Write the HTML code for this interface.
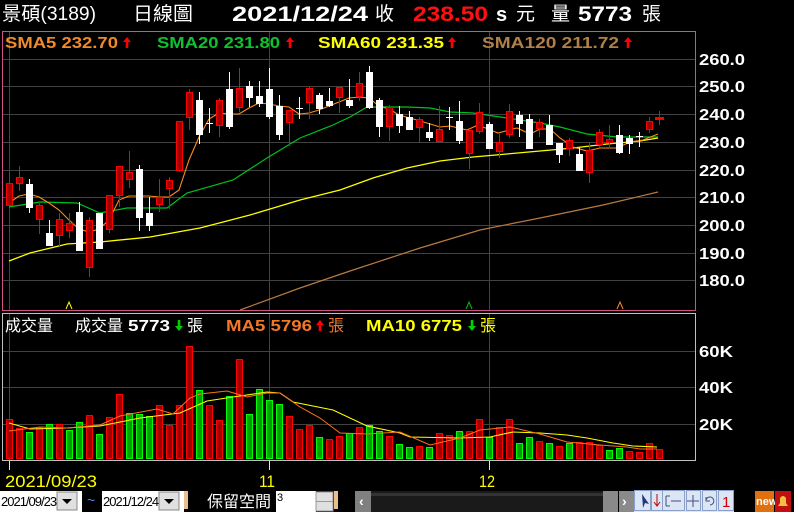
<!DOCTYPE html>
<html><head><meta charset="utf-8"><style>
html,body{margin:0;padding:0;background:#000;width:794px;height:512px;overflow:hidden;position:relative;font-family:"Liberation Sans","Noto Sans CJK TC",sans-serif}
svg{position:absolute;left:0;top:0}
</style></head><body>
<svg width="794" height="512" viewBox="0 0 794 512" xmlns="http://www.w3.org/2000/svg" font-family="Liberation Sans, Noto Sans CJK TC, sans-serif">
<defs>
<path id="up" d="M0,0 L4,5 L1.3,5 L1.3,11 L-1.3,11 L-1.3,5 L-4,5 Z"/>
<path id="dn" d="M0,11 L4,6 L1.3,6 L1.3,0 L-1.3,0 L-1.3,6 L-4,6 Z"/>
</defs>
<g stroke="#424242" stroke-width="1">
<line x1="3" y1="59.5" x2="695" y2="59.5"/><line x1="3" y1="86.5" x2="695" y2="86.5"/><line x1="3" y1="114.5" x2="695" y2="114.5"/><line x1="3" y1="142.5" x2="695" y2="142.5"/><line x1="3" y1="170.5" x2="695" y2="170.5"/><line x1="3" y1="197.5" x2="695" y2="197.5"/><line x1="3" y1="225.5" x2="695" y2="225.5"/><line x1="3" y1="253.5" x2="695" y2="253.5"/><line x1="3" y1="280.5" x2="695" y2="280.5"/>
<line x1="9.5" y1="32" x2="9.5" y2="310"/><line x1="269.5" y1="32" x2="269.5" y2="310"/><line x1="489.5" y1="32" x2="489.5" y2="310"/>
<line x1="3" y1="351.5" x2="695" y2="351.5"/><line x1="3" y1="387.5" x2="695" y2="387.5"/><line x1="3" y1="424.5" x2="695" y2="424.5"/>
<line x1="9.5" y1="314" x2="9.5" y2="460"/><line x1="269.5" y1="314" x2="269.5" y2="460"/><line x1="489.5" y1="314" x2="489.5" y2="460"/>
</g>
<rect x="2.5" y="31.5" width="693" height="279" fill="none" stroke="#d0508a"/>
<rect x="2.5" y="313.5" width="693" height="147" fill="none" stroke="#c0c0c0"/>
<polyline fill="none" stroke="#b87a40" stroke-width="1.2" points="240,310 300,288 350,271 420,248 480,230 540,218 603,205 658,192"/>
<polyline fill="none" stroke="#ffff00" stroke-width="1.3" points="9,261 30,253 67,244 100,242 150,237 200,228 250,215 300,200 340,190 373,178 407,168 440,161 473,157 507,154 540,151 573,148 607,144 640,141 658,138"/>
<polyline fill="none" stroke="#00c020" stroke-width="1.2" points="9,207 40,202 77,203 100,213 127,208 167,208 187,193 233,180 267,158 300,138 333,125 350,117 367,107 407,107 430,108 450,112 473,113 507,118 540,123 560,127 587,134 617,137 643,137 658,137"/>
<polyline fill="none" stroke="#ff8c1a" stroke-width="1.1" points="9,203 19,196 29,194 39,197 49,203 59,210 69,220 79,229 89,232 99,229 109,220 119,200 129,196 139,196 149,196 159,197 169,197 179,190 189,160 199,137 209,119 219,113 229,114 239,114 249,108 259,103 269,104 279,106 289,107 299,114 309,113 319,110 329,106 339,102 349,98 359,97 369,98 379,106 389,109 399,115 417,120 440,127 450,126 467,130 478,125 498,133 517,128 530,134 540,129 550,129 560,138 573,147 587,151 600,148 617,148 630,142 643,140 658,134"/>
<g stroke-width="1">
<g stroke="#ff0000" fill="#a00000">
<line x1="9.5" y1="172" x2="9.5" y2="206"/><rect x="6.5" y="183.5" width="6" height="22"/>
<line x1="19.5" y1="166" x2="19.5" y2="191"/><rect x="16.5" y="177.5" width="6" height="6"/>
<line x1="39.5" y1="202" x2="39.5" y2="234"/><rect x="36.5" y="205.5" width="6" height="14"/>
<line x1="59.5" y1="213" x2="59.5" y2="246"/><rect x="56.5" y="219.5" width="6" height="16"/>
<line x1="69.5" y1="213" x2="69.5" y2="238"/><rect x="66.5" y="223.5" width="6" height="7"/>
<line x1="89.5" y1="217" x2="89.5" y2="277"/><rect x="86.5" y="220.5" width="6" height="47"/>
<line x1="109.5" y1="195" x2="109.5" y2="233"/><rect x="106.5" y="195.5" width="6" height="34"/>
<line x1="119.5" y1="166" x2="119.5" y2="207"/><rect x="116.5" y="166.5" width="6" height="29"/>
<line x1="129.5" y1="151" x2="129.5" y2="188"/><rect x="126.5" y="172.5" width="6" height="7"/>
<line x1="159.5" y1="179" x2="159.5" y2="212"/><rect x="156.5" y="197.5" width="6" height="7"/>
<line x1="169.5" y1="177" x2="169.5" y2="209"/><rect x="166.5" y="180.5" width="6" height="8"/>
<line x1="179.5" y1="121" x2="179.5" y2="172"/><rect x="176.5" y="121.5" width="6" height="49"/>
<line x1="189.5" y1="89" x2="189.5" y2="130"/><rect x="186.5" y="92.5" width="6" height="25"/>
<line x1="219.5" y1="98" x2="219.5" y2="137"/><rect x="216.5" y="100.5" width="6" height="25"/>
<line x1="239.5" y1="68" x2="239.5" y2="112"/><rect x="236.5" y="88.5" width="6" height="19"/>
<line x1="289.5" y1="110" x2="289.5" y2="146"/><rect x="286.5" y="110.5" width="6" height="12"/>
<line x1="309.5" y1="87" x2="309.5" y2="119"/><rect x="306.5" y="88.5" width="6" height="14"/>
<line x1="339.5" y1="87" x2="339.5" y2="113"/><rect x="336.5" y="87.5" width="6" height="10"/>
<line x1="359.5" y1="72" x2="359.5" y2="101"/><rect x="356.5" y="83.5" width="6" height="13"/>
<line x1="389.5" y1="105" x2="389.5" y2="141"/><rect x="386.5" y="107.5" width="6" height="19"/>
<line x1="419.5" y1="117" x2="419.5" y2="142"/><rect x="416.5" y="119.5" width="6" height="8"/>
<line x1="439.5" y1="106" x2="439.5" y2="141"/><rect x="436.5" y="129.5" width="6" height="12"/>
<line x1="469.5" y1="130" x2="469.5" y2="169"/><rect x="466.5" y="130.5" width="6" height="23"/>
<line x1="479.5" y1="103" x2="479.5" y2="134"/><rect x="476.5" y="112.5" width="6" height="19"/>
<line x1="499.5" y1="134" x2="499.5" y2="158"/><rect x="496.5" y="142.5" width="6" height="9"/>
<line x1="509.5" y1="104" x2="509.5" y2="138"/><rect x="506.5" y="111.5" width="6" height="23"/>
<line x1="539.5" y1="119" x2="539.5" y2="137"/><rect x="536.5" y="122.5" width="6" height="6"/>
<line x1="569.5" y1="138" x2="569.5" y2="156"/><rect x="566.5" y="140.5" width="6" height="8"/>
<line x1="589.5" y1="143" x2="589.5" y2="183"/><rect x="586.5" y="150.5" width="6" height="22"/>
<line x1="599.5" y1="129" x2="599.5" y2="148"/><rect x="596.5" y="132.5" width="6" height="12"/>
<line x1="609.5" y1="125" x2="609.5" y2="148"/><rect x="606.5" y="139.5" width="6" height="3"/>
<line x1="649.5" y1="117" x2="649.5" y2="133"/><rect x="646.5" y="121.5" width="6" height="8"/>
<line x1="659.5" y1="111" x2="659.5" y2="125"/><rect x="655.5" y="117.5" width="8" height="2" fill="#ff0000"/>
</g>
<g stroke="#ffffff" fill="#ffffff">
<line x1="29.5" y1="179" x2="29.5" y2="213"/><rect x="26.5" y="184.5" width="6" height="23"/>
<line x1="49.5" y1="220" x2="49.5" y2="246"/><rect x="46.5" y="233.5" width="6" height="12"/>
<line x1="79.5" y1="202" x2="79.5" y2="250"/><rect x="76.5" y="212.5" width="6" height="38"/>
<line x1="99.5" y1="213" x2="99.5" y2="249"/><rect x="96.5" y="213.5" width="6" height="35"/>
<line x1="139.5" y1="165" x2="139.5" y2="231"/><rect x="136.5" y="169.5" width="6" height="48"/>
<line x1="149.5" y1="197" x2="149.5" y2="231"/><rect x="146.5" y="213.5" width="6" height="12"/>
<line x1="199.5" y1="92" x2="199.5" y2="144"/><rect x="196.5" y="100.5" width="6" height="34"/>
<line x1="209.5" y1="108" x2="209.5" y2="133"/><line x1="206" y1="123.5" x2="213" y2="123.5"/>
<line x1="229.5" y1="72" x2="229.5" y2="129"/><rect x="226.5" y="89.5" width="6" height="37"/>
<line x1="249.5" y1="81" x2="249.5" y2="107"/><rect x="246.5" y="86.5" width="6" height="11"/>
<line x1="259.5" y1="81" x2="259.5" y2="107"/><rect x="256.5" y="96.5" width="6" height="7"/>
<line x1="269.5" y1="68" x2="269.5" y2="119"/><rect x="266.5" y="89.5" width="6" height="27"/>
<line x1="279.5" y1="95" x2="279.5" y2="140"/><rect x="276.5" y="106.5" width="6" height="28"/>
<line x1="299.5" y1="97" x2="299.5" y2="119"/><line x1="296" y1="108.5" x2="303" y2="108.5"/>
<line x1="319.5" y1="93" x2="319.5" y2="114"/><rect x="316.5" y="95.5" width="6" height="13"/>
<line x1="329.5" y1="88" x2="329.5" y2="107"/><rect x="326.5" y="101.5" width="6" height="4"/>
<line x1="349.5" y1="79" x2="349.5" y2="108"/><rect x="346.5" y="100.5" width="6" height="5"/>
<line x1="369.5" y1="66" x2="369.5" y2="109"/><rect x="366.5" y="72.5" width="6" height="35"/>
<line x1="379.5" y1="98" x2="379.5" y2="137"/><rect x="376.5" y="100.5" width="6" height="26"/>
<line x1="399.5" y1="106" x2="399.5" y2="133"/><rect x="396.5" y="114.5" width="6" height="11"/>
<line x1="409.5" y1="111" x2="409.5" y2="130"/><rect x="406.5" y="117.5" width="6" height="12"/>
<line x1="429.5" y1="123" x2="429.5" y2="141"/><rect x="426.5" y="132.5" width="6" height="5"/>
<line x1="449.5" y1="107" x2="449.5" y2="130"/><line x1="446" y1="117.5" x2="453" y2="117.5"/>
<line x1="459.5" y1="101" x2="459.5" y2="144"/><rect x="456.5" y="121.5" width="6" height="19"/>
<line x1="489.5" y1="122" x2="489.5" y2="148"/><rect x="486.5" y="124.5" width="6" height="24"/>
<line x1="519.5" y1="111" x2="519.5" y2="137"/><rect x="516.5" y="115.5" width="6" height="8"/>
<line x1="529.5" y1="114" x2="529.5" y2="148"/><rect x="526.5" y="119.5" width="6" height="29"/>
<line x1="549.5" y1="115" x2="549.5" y2="145"/><rect x="546.5" y="125.5" width="6" height="19"/>
<line x1="559.5" y1="143" x2="559.5" y2="163"/><rect x="556.5" y="143.5" width="6" height="11"/>
<line x1="579.5" y1="148" x2="579.5" y2="170"/><rect x="576.5" y="154.5" width="6" height="16"/>
<line x1="619.5" y1="125" x2="619.5" y2="154"/><rect x="616.5" y="135.5" width="6" height="17"/>
<line x1="629.5" y1="135" x2="629.5" y2="154"/><rect x="626.5" y="138.5" width="6" height="5"/>
<line x1="639.5" y1="132" x2="639.5" y2="147"/><line x1="636" y1="136.5" x2="643" y2="136.5"/>
</g>
</g>
<path d="M66,309 L69,302 L72,309" fill="none" stroke="#ffff00"/>
<path d="M466,309 L469,302 L472,309" fill="none" stroke="#00c000"/>
<path d="M617,309 L620,302 L623,309" fill="none" stroke="#ff8c1a"/>
<g stroke="#ff0000" fill="#a00000">
<rect x="6.5" y="419.5" width="6" height="39"/><rect x="16.5" y="428.5" width="6" height="30"/><rect x="36.5" y="427.5" width="6" height="31"/><rect x="56.5" y="424.5" width="6" height="34"/><rect x="86.5" y="415.5" width="6" height="43"/><rect x="106.5" y="417.5" width="6" height="41"/><rect x="116.5" y="394.5" width="6" height="64"/><rect x="156.5" y="405.5" width="6" height="53"/><rect x="166.5" y="425.5" width="6" height="33"/><rect x="176.5" y="405.5" width="6" height="53"/><rect x="186.5" y="346.5" width="6" height="112"/><rect x="206.5" y="405.5" width="6" height="53"/><rect x="216.5" y="420.5" width="6" height="38"/><rect x="236.5" y="359.5" width="6" height="99"/><rect x="286.5" y="416.5" width="6" height="42"/><rect x="296.5" y="429.5" width="6" height="29"/><rect x="306.5" y="425.5" width="6" height="33"/><rect x="326.5" y="439.5" width="6" height="19"/><rect x="336.5" y="436.5" width="6" height="22"/><rect x="356.5" y="427.5" width="6" height="31"/><rect x="386.5" y="436.5" width="6" height="22"/><rect x="416.5" y="446.5" width="6" height="12"/><rect x="436.5" y="433.5" width="6" height="25"/><rect x="446.5" y="435.5" width="6" height="23"/><rect x="466.5" y="431.5" width="6" height="27"/><rect x="476.5" y="419.5" width="6" height="39"/><rect x="496.5" y="427.5" width="6" height="31"/><rect x="506.5" y="419.5" width="6" height="39"/><rect x="536.5" y="441.5" width="6" height="17"/><rect x="556.5" y="446.5" width="6" height="12"/><rect x="576.5" y="442.5" width="6" height="16"/><rect x="586.5" y="442.5" width="6" height="16"/><rect x="596.5" y="445.5" width="6" height="13"/><rect x="626.5" y="451.5" width="6" height="7"/><rect x="636.5" y="452.5" width="6" height="6"/><rect x="646.5" y="443.5" width="6" height="15"/><rect x="656.5" y="449.5" width="6" height="9"/>
</g>
<g stroke="#00ff00" fill="#00a000">
<rect x="26.5" y="432.5" width="6" height="26"/><rect x="46.5" y="424.5" width="6" height="34"/><rect x="66.5" y="430.5" width="6" height="28"/><rect x="76.5" y="422.5" width="6" height="36"/><rect x="96.5" y="434.5" width="6" height="24"/><rect x="126.5" y="413.5" width="6" height="45"/><rect x="136.5" y="414.5" width="6" height="44"/><rect x="146.5" y="416.5" width="6" height="42"/><rect x="196.5" y="390.5" width="6" height="68"/><rect x="226.5" y="396.5" width="6" height="62"/><rect x="246.5" y="414.5" width="6" height="44"/><rect x="256.5" y="389.5" width="6" height="69"/><rect x="266.5" y="400.5" width="6" height="58"/><rect x="276.5" y="404.5" width="6" height="54"/><rect x="316.5" y="437.5" width="6" height="21"/><rect x="346.5" y="433.5" width="6" height="25"/><rect x="366.5" y="425.5" width="6" height="33"/><rect x="376.5" y="431.5" width="6" height="27"/><rect x="396.5" y="444.5" width="6" height="14"/><rect x="406.5" y="447.5" width="6" height="11"/><rect x="426.5" y="447.5" width="6" height="11"/><rect x="456.5" y="431.5" width="6" height="27"/><rect x="486.5" y="437.5" width="6" height="21"/><rect x="516.5" y="443.5" width="6" height="15"/><rect x="526.5" y="437.5" width="6" height="21"/><rect x="546.5" y="443.5" width="6" height="15"/><rect x="566.5" y="443.5" width="6" height="15"/><rect x="606.5" y="450.5" width="6" height="8"/><rect x="616.5" y="448.5" width="6" height="10"/>
</g>
<polyline fill="none" stroke="#ffff00" stroke-width="1.1" points="9,423 30,429 67,428 100,426 140,418 180,413 207,401 233,397 267,392 280,393 293,402 333,410 367,426 400,433 410,437 460,438 490,437 513,432 540,433 567,435 587,438 613,443 633,446 657,447"/>
<polyline fill="none" stroke="#ff7020" stroke-width="1" points="9,431 40,427 67,428 100,425 120,416 157,409 173,414 190,398 200,394 227,391 247,397 267,393 280,393 300,407 320,418 340,433 367,434 400,432 430,445 460,438 480,430 510,427 540,434 567,442 600,445 627,447 640,449 657,449"/>
<g stroke="#ffff00"><line x1="9.5" y1="461" x2="9.5" y2="470"/><line x1="269.5" y1="461" x2="269.5" y2="470"/><line x1="489.5" y1="461" x2="489.5" y2="470"/></g>
<g fill="#ffff00" font-size="17"><text x="5" y="487" textLength="92" lengthAdjust="spacingAndGlyphs">2021/09/23</text><text x="259" y="487" textLength="16" lengthAdjust="spacingAndGlyphs">11</text><text x="479" y="487" textLength="16" lengthAdjust="spacingAndGlyphs">12</text></g>
<g fill="#ffffff" font-size="16" font-weight="bold">
<text x="699" y="65" textLength="46" lengthAdjust="spacingAndGlyphs">260.0</text><text x="699" y="92" textLength="46" lengthAdjust="spacingAndGlyphs">250.0</text><text x="699" y="120" textLength="46" lengthAdjust="spacingAndGlyphs">240.0</text><text x="699" y="148" textLength="46" lengthAdjust="spacingAndGlyphs">230.0</text><text x="699" y="176" textLength="46" lengthAdjust="spacingAndGlyphs">220.0</text><text x="699" y="203" textLength="46" lengthAdjust="spacingAndGlyphs">210.0</text><text x="699" y="231" textLength="46" lengthAdjust="spacingAndGlyphs">200.0</text><text x="699" y="259" textLength="46" lengthAdjust="spacingAndGlyphs">190.0</text><text x="699" y="286" textLength="46" lengthAdjust="spacingAndGlyphs">180.0</text>
<text x="699" y="357" textLength="34" lengthAdjust="spacingAndGlyphs">60K</text><text x="699" y="393" textLength="34" lengthAdjust="spacingAndGlyphs">40K</text><text x="699" y="430" textLength="34" lengthAdjust="spacingAndGlyphs">20K</text>
</g>
<g fill="#ffffff" font-size="19"><text x="2" y="20" textLength="94" lengthAdjust="spacingAndGlyphs">景碩(3189)</text><text x="133" y="20" textLength="60" lengthAdjust="spacingAndGlyphs">日線圖</text></g>
<text x="232" y="21" fill="#ffffff" font-size="21" font-weight="bold" textLength="136" lengthAdjust="spacingAndGlyphs">2021/12/24</text>
<text x="375" y="20" fill="#ffffff" font-size="19">收</text>
<text x="413" y="21" fill="#ff1010" font-size="21" font-weight="bold" textLength="75" lengthAdjust="spacingAndGlyphs">238.50</text>
<text x="496" y="21" fill="#ffffff" font-size="20" font-weight="bold">s</text>
<text x="516" y="20" fill="#ffffff" font-size="19">元</text>
<text x="551" y="20" fill="#ffffff" font-size="19">量</text>
<text x="578" y="21" fill="#ffffff" font-size="21" font-weight="bold" textLength="54" lengthAdjust="spacingAndGlyphs">5773</text>
<text x="642" y="20" fill="#ffffff" font-size="19">張</text>
<g font-size="16" font-weight="bold">
<text x="5" y="48" fill="#f08a2a" textLength="113" lengthAdjust="spacingAndGlyphs">SMA5 232.70</text>
<text x="157" y="48" fill="#10c030" textLength="123" lengthAdjust="spacingAndGlyphs">SMA20 231.80</text>
<text x="318" y="48" fill="#ffff00" textLength="126" lengthAdjust="spacingAndGlyphs">SMA60 231.35</text>
<text x="482" y="48" fill="#b08048" textLength="137" lengthAdjust="spacingAndGlyphs">SMA120 211.72</text>
</g>
<g fill="#ff0000"><use href="#up" x="127" y="37"/><use href="#up" x="290" y="37"/><use href="#up" x="452" y="37"/><use href="#up" x="628" y="37"/></g>
<g font-size="16"><text x="5" y="331" fill="#ffffff" textLength="48" lengthAdjust="spacingAndGlyphs">成交量</text><text x="75" y="331" fill="#ffffff" textLength="48" lengthAdjust="spacingAndGlyphs">成交量</text></g>
<text x="128" y="331" fill="#ffffff" font-size="16" font-weight="bold" textLength="42" lengthAdjust="spacingAndGlyphs">5773</text>
<use href="#dn" x="179" y="320" fill="#00d000"/>
<text x="187" y="331" fill="#ffffff" font-size="16">張</text>
<text x="226" y="331" fill="#f07828" font-size="16" font-weight="bold" textLength="86" lengthAdjust="spacingAndGlyphs">MA5 5796</text>
<use href="#up" x="320" y="320" fill="#ff0000"/>
<text x="328" y="331" fill="#f07828" font-size="16">張</text>
<text x="366" y="331" fill="#ffff00" font-size="16" font-weight="bold" textLength="96" lengthAdjust="spacingAndGlyphs">MA10 6775</text>
<use href="#dn" x="472" y="320" fill="#00d000"/>
<text x="480" y="331" fill="#ffff00" font-size="16">張</text>
<rect x="0" y="491" width="82" height="21" fill="#fff"/>
<rect x="57" y="492" width="20" height="18" fill="#e0e0e0" stroke="#888"/>
<path d="M62,499 L72,499 L67,504 Z" fill="#000"/>
<text x="1" y="506" font-size="13" fill="#000" letter-spacing="-1">2021/09/23</text>
<text x="87" y="505" font-size="14" fill="#5080ff">~</text>
<rect x="102" y="491" width="82" height="21" fill="#fff"/>
<rect x="159" y="492" width="20" height="18" fill="#e0e0e0" stroke="#888"/>
<path d="M164,499 L174,499 L169,504 Z" fill="#000"/>
<text x="103" y="506" font-size="13" fill="#000" letter-spacing="-1">2021/12/24</text>
<rect x="184" y="491" width="4" height="18" fill="#e8c090"/>
<text x="207" y="507" font-size="16" fill="#ffffff">保留空間</text>
<rect x="276" y="491" width="40" height="21" fill="#fff"/>
<text x="277" y="501" font-size="11" fill="#000">3</text>
<rect x="316" y="492" width="17" height="19" fill="#e0e0e0" stroke="#999"/>
<line x1="316" y1="501.5" x2="333" y2="501.5" stroke="#999"/>
<rect x="334" y="491" width="4" height="18" fill="#e8c090"/>
<rect x="355" y="491" width="16" height="21" fill="#808080"/>
<text x="359" y="506" font-size="14" font-weight="bold" fill="#fff">‹</text>
<rect x="371" y="491" width="232" height="21" fill="#1a1a1a"/>
<rect x="371" y="493" width="232" height="3" fill="#333"/>
<rect x="603" y="491" width="15" height="21" fill="#8a8a8a"/>
<rect x="619" y="491" width="15" height="21" fill="#8a8a8a"/>
<text x="622" y="506" font-size="14" font-weight="bold" fill="#fff">›</text>
<rect x="634" y="490" width="100" height="22" fill="#dbe5f3"/>
<g stroke="#8aa0c8" fill="none"><rect x="634.5" y="490.5" width="16" height="20"/><rect x="651.5" y="490.5" width="11" height="20"/><rect x="662.5" y="490.5" width="22" height="20"/><rect x="686.5" y="490.5" width="14" height="20"/><rect x="702.5" y="490.5" width="14" height="20"/><rect x="718.5" y="490.5" width="15" height="20"/></g>
<path d="M642,494 L649,504 L645,503 L643,508 Z" fill="#203880"/>
<path d="M657,494 L657,505 M654,502 L657,506 L660,502" stroke="#c00000" fill="none"/>
<path d="M666,496 L666,506 M666,496 L670,496 M666,506 L670,506 M671,501 L681,501" stroke="#405080" fill="none"/>
<path d="M693,495 L693,507 M687,501 L699,501" stroke="#405080" fill="none"/>
<path d="M706,500 A4,4 0 1 1 710,505 M706,497 L706,501 L710,501" stroke="#405080" fill="none"/>
<text x="722" y="507" font-size="15" fill="#d00000">1</text>
<rect x="755" y="491" width="19" height="21" fill="#e07010"/>
<text x="756" y="505" font-size="11" font-weight="bold" fill="#fff">new</text>
<rect x="775" y="491" width="16" height="21" fill="#c01010"/>
<path d="M778,506 L788,506 L786,503 L786,498 Q783,494 780,498 L780,503 Z" fill="#f0c040"/>
</svg>
</body></html>
